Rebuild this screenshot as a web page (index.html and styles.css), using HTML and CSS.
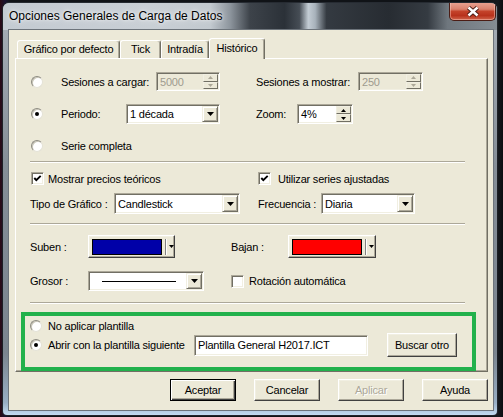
FILE: index.html
```html
<!DOCTYPE html>
<html>
<head>
<meta charset="utf-8">
<title>Opciones Generales de Carga de Datos</title>
<link rel="stylesheet" href="styles.css">
</head>
<body>
<div class="screen">
  <div class="window">
    <div class="titlebar">
      <span class="title">Opciones Generales de Carga de Datos</span>
      <div class="close">
        <svg width="14" height="11" viewBox="0 0 14 11"><path d="M2.5 1.5 L11.5 9.5 M11.5 1.5 L2.5 9.5" stroke="#4a1e16" stroke-width="4.4" fill="none"/><path d="M2.5 1.5 L11.5 9.5 M11.5 1.5 L2.5 9.5" stroke="#ffffff" stroke-width="2.4" fill="none"/></svg>
      </div>
    </div>
    <div class="client">
      <div class="tabs">
        <div class="tab t1">Gráfico por defecto</div>
        <div class="tab t2">Tick</div>
        <div class="tab t3">Intradía</div>
        <div class="tab t4 active">Histórico</div>
      </div>
      <div class="panel">
        <div class="sec1">
          <div class="row h19">
            <span class="radio r-first"></span>
            <span class="lbl w95">Sesiones a cargar:</span>
            <div class="field spin disabled w64 h19">
              <span class="val">5000</span>
              <span class="spinbtns">
                <span class="sb"><svg width="5" height="3" viewBox="0 0 5 3"><polygon points="2.5,0 5,3 0,3" fill="#aca899"/></svg></span>
                <span class="sb"><svg width="5" height="3" viewBox="0 0 5 3"><polygon points="0,0 5,0 2.5,3" fill="#aca899"/></svg></span>
              </span>
            </div>
            <span class="lbl w102 ml36">Sesiones a mostrar:</span>
            <div class="field spin disabled w65 h19">
              <span class="val">250</span>
              <span class="spinbtns">
                <span class="sb"><svg width="5" height="3" viewBox="0 0 5 3"><polygon points="2.5,0 5,3 0,3" fill="#aca899"/></svg></span>
                <span class="sb"><svg width="5" height="3" viewBox="0 0 5 3"><polygon points="0,0 5,0 2.5,3" fill="#aca899"/></svg></span>
              </span>
            </div>
          </div>
          <div class="row h20">
            <span class="radio r-first checked"></span>
            <span class="lbl w65">Periodo:</span>
            <div class="field combo w94 h20">
              <span class="val">1 década</span>
              <span class="dd"><svg width="7" height="4" viewBox="0 0 7 4"><polygon points="0,0 7,0 3.5,4" fill="#000"/></svg></span>
            </div>
            <span class="lbl w41 ml36">Zoom:</span>
            <div class="field spin w56 h20">
              <span class="val dark">4%</span>
              <span class="spinbtns">
                <span class="sb"><svg width="5" height="3" viewBox="0 0 5 3"><polygon points="2.5,0 5,3 0,3" fill="#000"/></svg></span>
                <span class="sb"><svg width="5" height="3" viewBox="0 0 5 3"><polygon points="0,0 5,0 2.5,3" fill="#000"/></svg></span>
              </span>
            </div>
          </div>
          <div class="row h17">
            <span class="radio r-first"></span>
            <span class="lbl">Serie completa</span>
          </div>
        </div>

        <div class="sep s1"></div>

        <div class="row h19 chkrow">
          <span class="check c-first"><svg width="9" height="9" viewBox="0 0 9 9"><polyline points="1.3,4 3.3,6.2 7.7,1.8" fill="none" stroke="#000" stroke-width="1.9"/></svg></span>
          <span class="lbl w210">Mostrar precios teóricos</span>
          <span class="check"><svg width="9" height="9" viewBox="0 0 9 9"><polyline points="1.3,4 3.3,6.2 7.7,1.8" fill="none" stroke="#000" stroke-width="1.9"/></svg></span>
          <span class="lbl ml7">Utilizar series ajustadas</span>
        </div>
        <div class="row h21 typerow">
          <span class="lbl w84 l-first">Tipo de Gráfico :</span>
          <div class="field combo w126 h21">
            <span class="val">Candlestick</span>
            <span class="dd"><svg width="7" height="4" viewBox="0 0 7 4"><polygon points="0,0 7,0 3.5,4" fill="#000"/></svg></span>
          </div>
          <span class="lbl w63 ml18">Frecuencia :</span>
          <div class="field combo w94 h21">
            <span class="val">Diaria</span>
            <span class="dd"><svg width="7" height="4" viewBox="0 0 7 4"><polygon points="0,0 7,0 3.5,4" fill="#000"/></svg></span>
          </div>
        </div>

        <div class="sep s2"></div>

        <div class="row h23 colorrow">
          <span class="lbl w58 l-first">Suben :</span>
          <div class="colorbtn w87">
            <span class="swatch blue"></span>
            <span class="etch"></span>
            <svg class="arr" width="5" height="3" viewBox="0 0 5 3"><polygon points="0,0 5,0 2.5,3" fill="#000"/></svg>
          </div>
          <span class="lbl w57 ml56">Bajan :</span>
          <div class="colorbtn w88">
            <span class="swatch red"></span>
            <span class="etch"></span>
            <svg class="arr" width="5" height="3" viewBox="0 0 5 3"><polygon points="0,0 5,0 2.5,3" fill="#000"/></svg>
          </div>
        </div>
        <div class="row h20 grosorrow">
          <span class="lbl w58 l-first">Grosor :</span>
          <div class="field combo w116 h20">
            <span class="val"><span class="line"></span></span>
            <span class="dd"><svg width="7" height="4" viewBox="0 0 7 4"><polygon points="0,0 7,0 3.5,4" fill="#000"/></svg></span>
          </div>
          <span class="check ml27"></span>
          <span class="lbl ml5">Rotación automática</span>
        </div>

        <div class="sep s3"></div>

        <div class="template">
          <div class="row h13">
            <span class="radio r-tpl"></span>
            <span class="lbl">No aplicar plantilla</span>
          </div>
          <div class="row h24 tplrow2">
            <span class="radio r-tpl checked"></span>
            <span class="lbl w146">Abrir con la plantilla siguiente</span>
            <div class="field text w174 h21"><span class="val">Plantilla General H2017.ICT</span></div>
            <div class="btn w70 h24 ml19">Buscar otro</div>
          </div>
        </div>
      </div>
      <div class="buttons">
        <div class="btn default">Aceptar</div>
        <div class="btn">Cancelar</div>
        <div class="btn disabledbtn">Aplicar</div>
        <div class="btn">Ayuda</div>
      </div>
    </div>
  </div>
</div>
</body>
</html>
```

FILE: styles.css
```css
* { box-sizing: border-box; }
html, body { margin: 0; padding: 0; }
body {
  width: 503px;
  height: 417px;
  overflow: hidden;
  background: #0e1013;
  font-family: "Liberation Sans", Arial, sans-serif;
  font-size: 11px;
  letter-spacing: -0.2px;
  color: #000;
}
.screen {
  width: 503px;
  height: 417px;
  padding: 2px 5px 0 2px;
  background:
    linear-gradient(90deg, #2a0a14 0, #1a1230 1%, #101317 2%, #101317 97%, #16191d 99%, #0b0d10 100%);
}
.window {
  width: 496px;
  height: 414px;
  border: 1px solid rgba(10, 12, 16, 0.85);
  border-radius: 7px 7px 5px 5px;
  padding: 0 4px 5px 6px;
  display: flex;
  flex-direction: column;
  background: linear-gradient(180deg, #a9b1b9 0%, #858e97 40%, #7b858f 85%, #98aec4 97%, #c3dbf1 100%);
  overflow: hidden;
}
.titlebar {
  height: 27px;
  margin: 0 -4px 0 -6px;
  padding: 0 0 2px 6px;
  display: flex;
  align-items: center;
  background: linear-gradient(90deg,
    #c4cbd2 0%, #c9cfd5 30%, #c2c9cf 42%, #8d959d 46%, #3d434a 50%,
    #2b3138 57%, #464d55 60%, #c3ccd4 61.8%, #a8b2bb 63.2%, #343a41 65.5%,
    #272c32 78%, #353b42 86%, #6f777e 90%, #858d94 100%);
}
.title {
  font-family: "Liberation Sans", Arial, sans-serif;
  font-size: 12px;
  letter-spacing: 0;
  color: #000;
  text-shadow: 0 0 6px rgba(255,255,255,0.9), 0 0 3px rgba(255,255,255,0.7);
}
.close {
  margin-left: auto;
  margin-right: 1px;
  align-self: flex-start;
  margin-top: -1px;
  width: 47px;
  height: 19px;
  border: 1px solid #4b1c14;
  border-top: none;
  border-radius: 0 0 5px 5px;
  background: linear-gradient(180deg, #e9a595 0%, #d9806c 40%, #c4432a 52%, #b8321c 75%, #d0654c 100%);
  box-shadow: inset 0 0 0 1px rgba(255,210,200,0.45);
  display: flex;
  align-items: center;
  justify-content: center;
}
.client {
  flex: 1;
  background: #ece9d8;
  box-shadow: 0 0 0 1px #6d747b;
  padding: 8px 5px 9px 6px;
  display: flex;
  flex-direction: column;
}
.tabs {
  height: 20px;
  padding-left: 2px;
  display: flex;
  align-items: flex-end;
}
.tab {
  height: 18px;
  background: #ece9d8;
  border-top: 1px solid #fff;
  border-left: 1px solid #fff;
  border-right: 1px solid #716f64;
  box-shadow: inset -1px 0 #aca899;
  border-radius: 3px 3px 0 0;
  text-align: center;
  line-height: 16px;
  white-space: nowrap;
}
.t1 { width: 103px; }
.t2 { width: 41px; }
.t3 { width: 48px; }
.t4 { width: 56px; }
.tab.active {
  height: 21px;
  margin-bottom: -1px;
  position: relative;
  z-index: 2;
  line-height: 18px;
}
.panel {
  height: 314px;
  border: 1px solid;
  border-color: #fff #716f64 #716f64 #fff;
  box-shadow: inset -1px -1px #aca899;
  display: flex;
  flex-direction: column;
}
.sec1 {
  display: flex;
  flex-direction: column;
  gap: 13px;
  padding-top: 13px;
}
.row {
  display: flex;
  align-items: center;
  white-space: nowrap;
}
.h13 { height: 13px; }
.h17 { height: 17px; }
.h19 { height: 19px; }
.h20 { height: 20px; }
.h21 { height: 21px; }
.h23 { height: 23px; }
.h24 { height: 24px; }
.lbl { display: inline-block; }
.w41 { width: 41px; }
.w56 { width: 56px; }
.w57 { width: 57px; }
.w58 { width: 58px; }
.w63 { width: 63px; }
.w64 { width: 64px; }
.w65 { width: 65px; }
.w70 { width: 70px; }
.w84 { width: 84px; }
.w87 { width: 87px; }
.w88 { width: 88px; }
.w94 { width: 94px; }
.w95 { width: 95px; }
.w102 { width: 102px; }
.w116 { width: 116px; }
.w126 { width: 126px; }
.w146 { width: 146px; }
.w174 { width: 174px; }
.w210 { width: 210px; }
.ml5 { margin-left: 5px; }
.ml7 { margin-left: 7px; }
.ml18 { margin-left: 18px; }
.ml19 { margin-left: 19px; }
.ml27 { margin-left: 27px; }
.ml36 { margin-left: 36px; }
.ml56 { margin-left: 56px; }

/* radio */
.radio {
  width: 12px;
  height: 12px;
  flex: none;
  border-radius: 50%;
  background: #fff;
  border: 1px solid;
  border-color: #8d8b80 #e4e2d6 #e4e2d6 #8d8b80;
  box-shadow: inset 1px 1px 0 #c9c6b8;
  display: flex;
  align-items: center;
  justify-content: center;
}
.radio.checked::after {
  content: "";
  width: 4px;
  height: 4px;
  border-radius: 50%;
  background: #000;
}
.r-first { margin-left: 15px; margin-right: 18px; }
.r-tpl { margin-left: 5px; margin-right: 6px; }

/* checkbox */
.check {
  width: 13px;
  height: 13px;
  flex: none;
  background: #fff;
  border: 1px solid;
  border-color: #aca899 #fff #fff #aca899;
  box-shadow: inset 1px 1px #716f64, inset -1px -1px #f1efe2;
  display: flex;
  align-items: center;
  justify-content: center;
}
.c-first { margin-left: 15px; margin-right: 4px; }
.chkrow { margin-top: 7px; }
.chkrow .w210 { width: 210px; }
.typerow { margin-top: 6px; }
.l-first { margin-left: 14px; }

/* sunken fields */
.field {
  flex: none;
  display: flex;
  align-items: stretch;
  background: #fff;
  border: 1px solid;
  border-color: #aca899 #fff #fff #aca899;
  box-shadow: inset 1px 1px #716f64, inset -1px -1px #f1efe2;
  padding: 1px;
}
.field.disabled { background: #ece9d8; }
.val {
  flex: 1;
  padding-left: 2px;
  display: flex;
  align-items: center;
  overflow: hidden;
}
.disabled .val { color: #9e9b8f; }
.dd {
  width: 16px;
  flex: none;
  background: #ece9d8;
  border: 1px solid;
  border-color: #f1efe2 #716f64 #716f64 #f1efe2;
  box-shadow: inset 1px 1px #fff, inset -1px -1px #aca899;
  display: flex;
  align-items: center;
  justify-content: center;
}
.spinbtns {
  width: 15px;
  flex: none;
  display: flex;
  flex-direction: column;
}
.sb {
  flex: 1;
  background: #ece9d8;
  border: 1px solid;
  border-color: #f1efe2 #716f64 #716f64 #f1efe2;
  display: flex;
  align-items: center;
  justify-content: center;
}
.line {
  width: 74px;
  height: 1px;
  background: #000;
  margin-left: 10px;
}

/* separators */
.sep {
  margin-left: 14px;
  width: 435px;
  height: 2px;
  flex: none;
  border-top: 1px solid #aca899;
  border-bottom: 1px solid #fff;
}
.s1 { margin-top: 7px; }
.s2 { margin-top: 9px; }
.s3 { margin-top: 11px; }

/* color buttons */
.colorrow { margin-top: 10px; }
.grosorrow { margin-top: 13px; }
.colorbtn {
  height: 23px;
  flex: none;
  background: #ece9d8;
  border: 1px solid;
  border-color: #fff #404040 #404040 #fff;
  box-shadow: inset -1px -1px #aca899, inset 1px 1px #f1efe2;
  display: flex;
  align-items: center;
}
.swatch {
  margin-left: 3px;
  width: 70px;
  height: 16px;
  border: 1px solid #000;
}
.swatch.blue { background: #0000a8; }
.swatch.red { background: #ff0000; }
.etch {
  margin-left: 3px;
  width: 2px;
  height: 16px;
  border-left: 1px solid #808080;
  border-right: 1px solid #fff;
}
.arr { margin-left: 2px; }

/* template box */
.template {
  margin-top: 8px;
  margin-left: 5px;
  width: 455px;
  height: 59px;
  flex: none;
  border: 4px solid #22b14c;
  padding-top: 3px;
  display: flex;
  flex-direction: column;
}
.tplrow2 { margin-top: 1px; }
.field.text .val { padding-left: 2px; }

/* buttons */
.btn {
  height: 22px;
  width: 66px;
  flex: none;
  background: #ece9d8;
  border: 1px solid;
  border-color: #fff #404040 #404040 #fff;
  box-shadow: inset -1px -1px #aca899, inset 1px 1px #f1efe2;
  display: flex;
  align-items: center;
  justify-content: center;
}
.btn.h24 { height: 24px; width: 70px; }
.btn.default {
  border: 1px solid #000;
  box-shadow: inset 1px 1px #fff, inset -1px -1px #404040, inset -2px -2px #aca899;
}
.btn.disabledbtn { color: #aca899; text-shadow: 1px 1px 0 #fff; }
.buttons {
  margin-top: 7px;
  display: flex;
  justify-content: flex-end;
  gap: 18px;
}
```
